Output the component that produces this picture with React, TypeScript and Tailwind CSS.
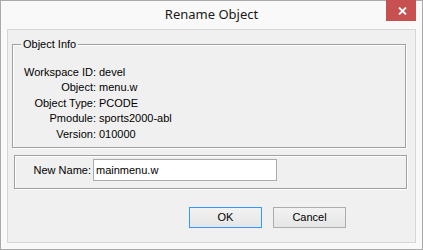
export default function App() {
  const rows: [string, string][] = [
    ["Workspace ID:", "devel"],
    ["Object:", "menu.w"],
    ["Object Type:", "PCODE"],
    ["Pmodule:", "sports2000-abl"],
    ["Version:", "010000"],
  ];
  const ui = { fontFamily: '"Liberation Sans", Arial, sans-serif' };
  return (
    <div
      className="relative flex h-[250px] w-[423px] flex-col border border-[#aaaaaa] bg-[#f9f9f9] text-black"
      style={ui}
    >
      <div
        className="flex h-[28px] items-center justify-center text-[13px] text-[#1a1a1a]"
        style={{ fontFamily: '"Noto Sans", sans-serif' }}
      >
        Rename Object
      </div>
      <div className="absolute right-[6px] top-[-1px] flex h-[21px] w-[30px] items-center justify-center bg-[#c75050]">
        <svg width="9" height="8" viewBox="0 0 9 8" className="ml-[2px]">
          <path d="M1 0.5 L8 7.5 M8 0.5 L1 7.5" stroke="#fff" strokeWidth="1.8" fill="none" />
        </svg>
      </div>
      <div className="mx-[6px] flex h-[214px] flex-col border border-[#d6d6d6] bg-[#f0f0f0]">
        <div className="relative ml-[4px] mt-[14px] h-[104px] w-[394px] border border-[#a0a0a0] pl-0 pt-[20px] shadow-[1px_1px_0_#ffffff,inset_1px_1px_0_#ffffff]">
          <span className="absolute left-[8px] top-[-8px] bg-[#f0f0f0] px-[2px] text-[11px] leading-[14px]">
            Object Info
          </span>
          <div className="flex flex-col text-[11px] leading-[15.4px]">
            {rows.map(([k, v]) => (
              <div key={k} className="flex">
                <span className="w-[83px] text-right">{k}</span>
                <span className="pl-[3px]">{v}</span>
              </div>
            ))}
          </div>
        </div>
        <div className="ml-[6px] mt-[7px] flex h-[34px] w-[393px] items-start border border-[#a0a0a0] pt-[3px] shadow-[1px_1px_0_#ffffff,inset_1px_1px_0_#ffffff]">
          <span className="w-[76px] pt-[4px] text-right text-[11px] leading-[14px]">New Name:</span>
          <div className="ml-[2px] flex h-[22px] w-[184px] items-center border border-[#ababab] bg-white pl-[2px] text-[11px]">
            mainmenu.w
          </div>
        </div>
        <div className="mt-[18px] flex justify-end gap-[11px] pr-[69px]">
          <div className="flex h-[21px] w-[73px] items-center justify-center border border-[#3399ff] bg-gradient-to-b from-[#f2f2f2] to-[#e6e6e6] text-[11px]">
            OK
          </div>
          <div className="flex h-[21px] w-[73px] items-center justify-center border border-[#adadad] bg-gradient-to-b from-[#f2f2f2] to-[#e6e6e6] text-[11px]">
            Cancel
          </div>
        </div>
      </div>
    </div>
  );
}
